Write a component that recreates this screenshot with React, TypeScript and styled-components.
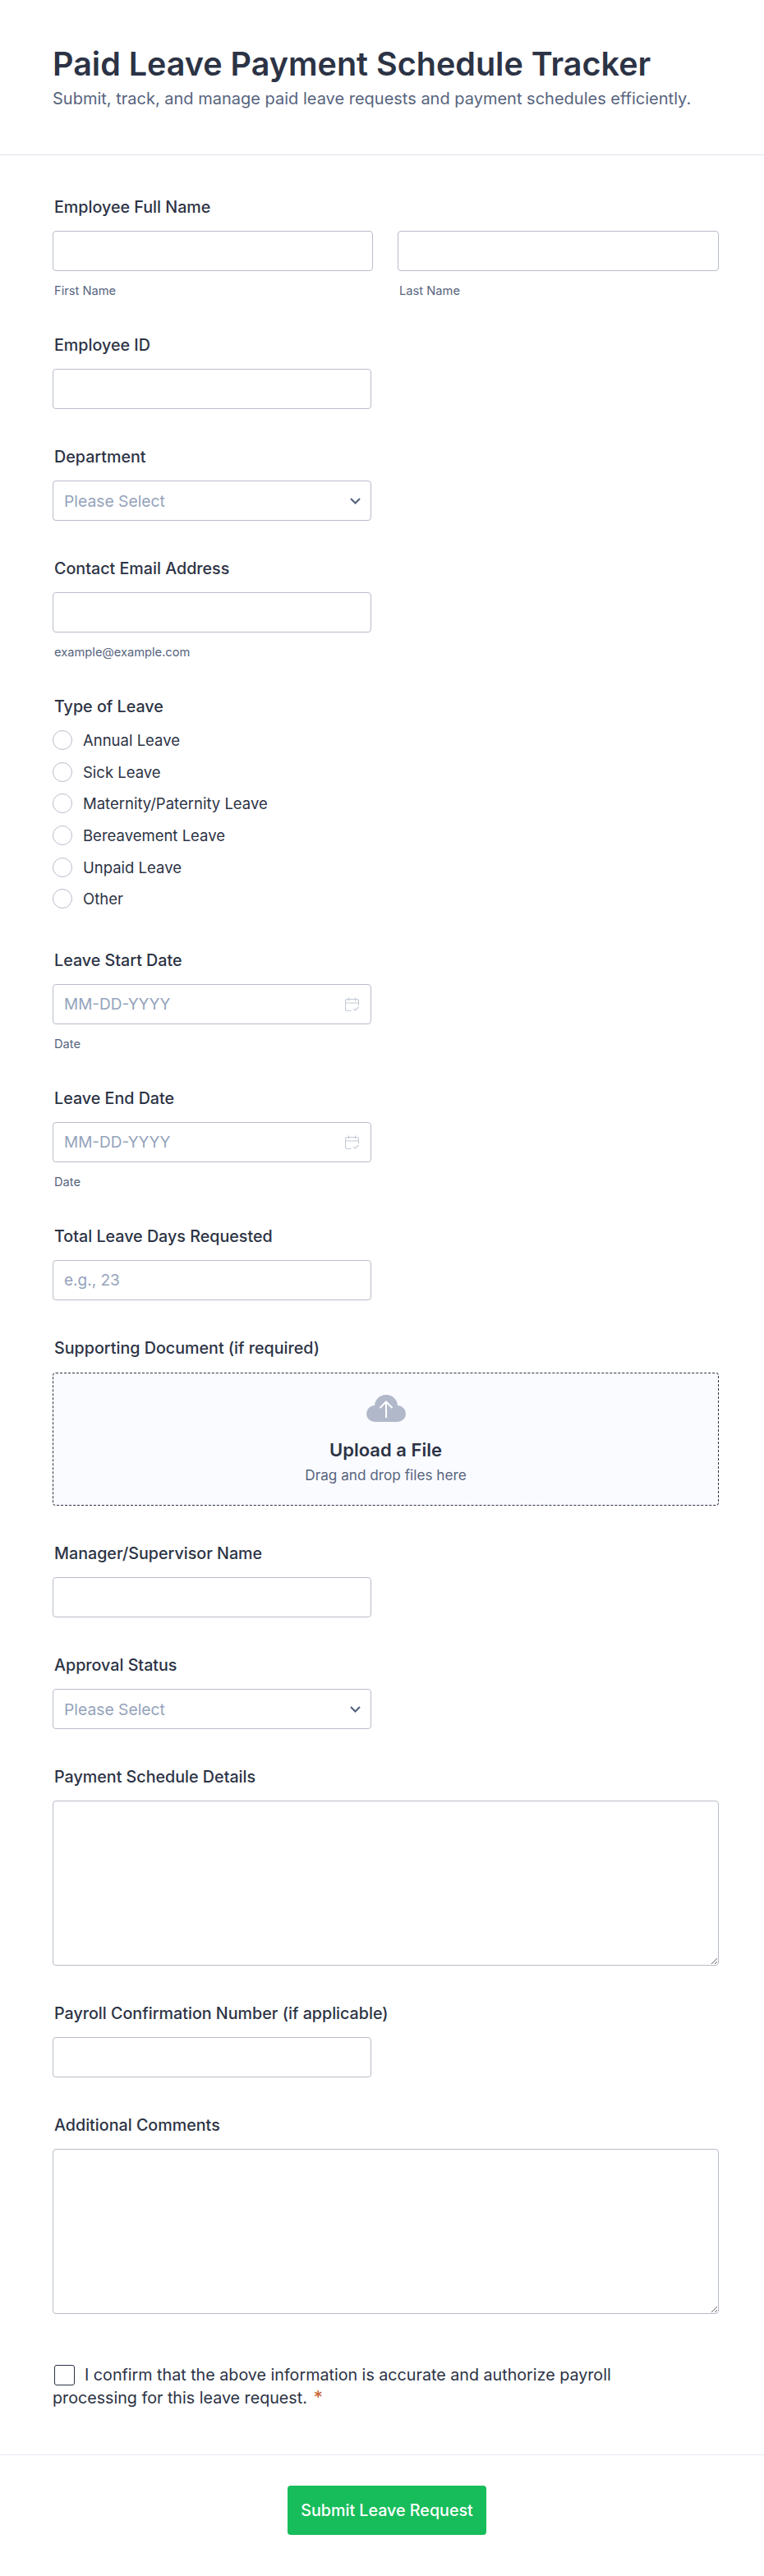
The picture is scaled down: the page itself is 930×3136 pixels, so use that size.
import styled, { createGlobalStyle } from 'styled-components';

const GlobalStyle = createGlobalStyle`
  html, body {
    margin: 0;
    background: #fff;
  }
  * {
    box-sizing: border-box;
    font-optical-sizing: none;
  }
  body {
    font-family: Inter, "Liberation Sans", sans-serif;
    color: #2c3345;
  }
`;

const Page = styled.div`
  width: 930px;
  height: 3136px;
  background: #fff;
`;

const Header = styled.header`
  height: 189px;
  padding: 54px 64px 0;
  border-bottom: 1px solid #dfe1ea;
`;

const Title = styled.h1`
  margin: 0 0 6px;
  font-size: 39.5px;
  line-height: 48px;
  font-weight: 600;
  color: #2c3345;
`;

const Subtitle = styled.p`
  margin: 0;
  font-size: 20px;
  line-height: 24px;
  color: #57647e;
`;

const Form = styled.form`
  padding: 51px 54px 0 64px;
`;

const Field = styled.div`
  margin-bottom: 46px;
`;

const Label = styled.label`
  display: block;
  padding-left: 2px;
  margin-bottom: ${(p) => p.$gap ?? 17}px;
  font-size: 19.7px;
  line-height: 24px;
  font-weight: 500;
  color: #2c3345;
`;

const NameRow = styled.div`
  display: grid;
  grid-template-columns: 390px 391px;
  gap: 30px;
`;

const Input = styled.input`
  display: block;
  width: ${(p) => (p.$full ? '100%' : '388px')};
  height: 49px;
  padding: 0 13px;
  border: 1px solid #b8bdc9;
  border-radius: 4px;
  background: #fff;
  font: 400 19px Inter, sans-serif;
  color: #2c3345;
  &::placeholder {
    color: #94a3bb;
    opacity: 1;
  }
`;

const Sub = styled.span`
  display: block;
  margin-top: 16px;
  padding-left: 2px;
  font-size: 14.7px;
  line-height: 16px;
  color: #57647e;
`;

const Wrap = styled.div`
  position: relative;
  width: 388px;
`;

const Select = styled.select`
  display: block;
  width: 100%;
  height: 49px;
  padding: 0 13px;
  border: 1px solid #b8bdc9;
  border-radius: 4px;
  background: #fff;
  appearance: none;
  font: 400 19.3px Inter, sans-serif;
  color: #94a3bb;
`;

const IconSpot = styled.span`
  position: absolute;
  top: 50%;
  right: ${(p) => p.$right}px;
  display: flex;
  transform: translateY(-50%);
  pointer-events: none;
`;

const Radios = styled.div`
  display: flex;
  flex-direction: column;
  gap: 14.7px;
  margin: 1px 0 50.6px;
`;

const RadioRow = styled.label`
  display: flex;
  align-items: center;
  gap: 13px;
  height: 24px;
  font-size: 18.5px;
  color: #2c3345;
`;

const Radio = styled.input`
  appearance: none;
  width: 24px;
  height: 24px;
  margin: 0;
  border: 1px solid #b8bdc9;
  border-radius: 50%;
  background: #fff;
`;

const Upload = styled.div`
  display: flex;
  flex-direction: column;
  align-items: center;
  width: 811px;
  height: 162px;
  padding-top: 26px;
  border: 1px dashed #2c3345;
  border-radius: 4px;
  background: #fafbff;
`;

const UploadTitle = styled.div`
  margin-top: 21px;
  font-size: 22px;
  line-height: 26px;
  font-weight: 600;
  color: #2c3345;
`;

const UploadHint = styled.div`
  margin-top: 7px;
  font-size: 17.2px;
  line-height: 22px;
  color: #57647e;
`;

const TextArea = styled.textarea`
  display: block;
  width: 811px;
  height: 201px;
  padding: 12px;
  border: 1px solid #b8bdc9;
  border-radius: 4px;
  background: #fff;
`;

const Confirm = styled.div`
  width: 760px;
  margin-top: 60px;
  font-size: 19.7px;
  line-height: 28px;
  color: #2c3345;
`;

const Check = styled.input`
  appearance: none;
  width: 25px;
  height: 25px;
  margin: 0 12px 0 2px;
  border: 1.5px solid #2c3345;
  border-radius: 3px;
  vertical-align: -6px;
`;

const Star = styled.span`
  margin-left: 8px;
  font-size: 22px;
  line-height: 20px;
  color: #c8602e;
`;

const Footer = styled.footer`
  display: flex;
  justify-content: center;
  margin-top: 55px;
  padding: 37px 0 0 12px;
  border-top: 1px solid #e6e8f0;
`;

const Submit = styled.button`
  width: 242px;
  height: 60px;
  border: 0;
  border-radius: 4px;
  background: #18bd5b;
  font: 500 19.7px Inter, sans-serif;
  color: #fff;
`;

const Chevron = () => (
  <svg width="13" height="8" viewBox="0 0 13 8" fill="none">
    <path d="M1 1l5.500 5.500L12 1" stroke="#57647e" strokeWidth="2.2" />
  </svg>
);

const CalendarIcon = () => (
  <svg width="17" height="18" viewBox="0 0 17 18" fill="none" stroke="#c3c9d6" strokeWidth="1.2">
    <path d="M7.500 16.500H2.500a2 2 0 0 1-2-2V4.500a2 2 0 0 1 2-2h12a2 2 0 0 1 2 2V10" />
    <path d="M.5 7h16M4.500 .5v4M12.500 .5v4M10.500 14l2 2 4-4" />
  </svg>
);

const CloudIcon = () => (
  <svg width="48" height="33" viewBox="0 0 48 33">
    <g fill="#b1b8c9">
      <circle cx="24" cy="14" r="14" />
      <circle cx="10" cy="23" r="10" />
      <circle cx="38" cy="23" r="10" />
      <rect x="10" y="20" width="28" height="13" />
    </g>
    <path fill="none" stroke="#fff" strokeWidth="2" d="M24 28V9M16.500 16l7.500-7.500 7.500 7.500" />
  </svg>
);

const leaveTypes = [
  'Annual Leave',
  'Sick Leave',
  'Maternity/Paternity Leave',
  'Bereavement Leave',
  'Unpaid Leave',
  'Other',
];

const DateField = ({ label }: { label: string }) => (
  <Field>
    <Label>{label}</Label>
    <Wrap>
      <Input $full placeholder="MM-DD-YYYY" />
      <IconSpot $right={15}>
        <CalendarIcon />
      </IconSpot>
    </Wrap>
    <Sub>Date</Sub>
  </Field>
);

const SelectField = ({ label }: { label: string }) => (
  <Field>
    <Label>{label}</Label>
    <Wrap>
      <Select>
        <option>Please Select</option>
      </Select>
      <IconSpot $right={13}>
        <Chevron />
      </IconSpot>
    </Wrap>
  </Field>
);

const App: React.FC = () => {
  return (
    <Page>
      <GlobalStyle />
      <Header>
        <Title>Paid Leave Payment Schedule Tracker</Title>
        <Subtitle>Submit, track, and manage paid leave requests and payment schedules efficiently.</Subtitle>
      </Header>
      <Form>
        <Field>
          <Label>Employee Full Name</Label>
          <NameRow>
            <div>
              <Input $full />
              <Sub>First Name</Sub>
            </div>
            <div>
              <Input $full />
              <Sub>Last Name</Sub>
            </div>
          </NameRow>
        </Field>
        <Field>
          <Label>Employee ID</Label>
          <Input />
        </Field>
        <SelectField label="Department" />
        <Field>
          <Label>Contact Email Address</Label>
          <Input />
          <Sub>example@example.com</Sub>
        </Field>
        <Label>Type of Leave</Label>
        <Radios>
          {leaveTypes.map((type) => (
            <RadioRow key={type}>
              <Radio type="radio" name="leave" />
              {type}
            </RadioRow>
          ))}
        </Radios>
        <DateField label="Leave Start Date" />
        <DateField label="Leave End Date" />
        <Field>
          <Label>Total Leave Days Requested</Label>
          <Input placeholder="e.g., 23" />
        </Field>
        <Field>
          <Label $gap={18.4}>Supporting Document (if required)</Label>
          <Upload>
            <CloudIcon />
            <UploadTitle>Upload a File</UploadTitle>
            <UploadHint>Drag and drop files here</UploadHint>
          </Upload>
        </Field>
        <Field>
          <Label>Manager/Supervisor Name</Label>
          <Input />
        </Field>
        <SelectField label="Approval Status" />
        <Field>
          <Label>Payment Schedule Details</Label>
          <TextArea />
        </Field>
        <Field>
          <Label>Payroll Confirmation Number (if applicable)</Label>
          <Input />
        </Field>
        <Field>
          <Label>Additional Comments</Label>
          <TextArea />
        </Field>
        <Confirm>
          <Check type="checkbox" />
          I confirm that the above information is accurate and authorize payroll processing for this leave request.
          <Star>*</Star>
        </Confirm>
      </Form>
      <Footer>
        <Submit type="button">Submit Leave Request</Submit>
      </Footer>
    </Page>
  );
};

export default App;
